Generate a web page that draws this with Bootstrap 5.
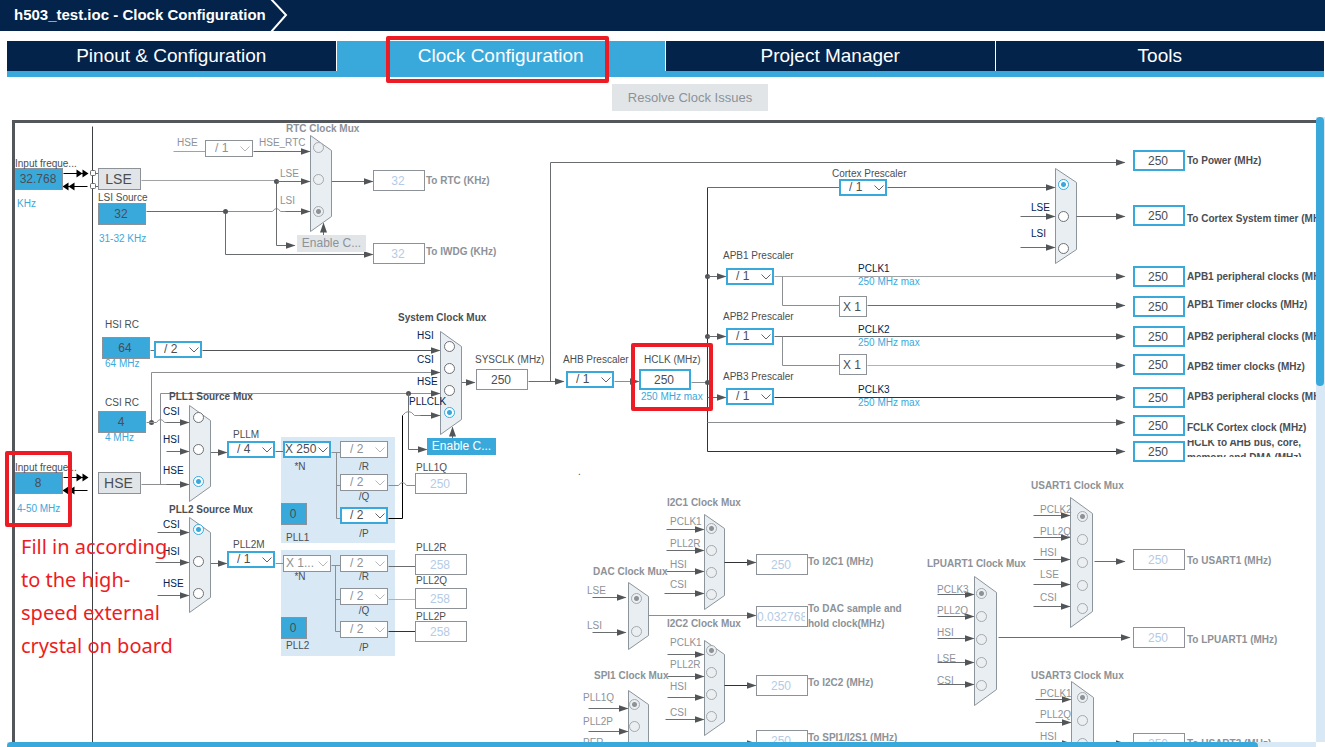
<!DOCTYPE html>
<html lang="en">
<head>
<meta charset="utf-8">
<meta name="viewport" content="width=device-width, initial-scale=1">
<title>h503_test.ioc - Clock Configuration</title>
<link rel="stylesheet" href="https://cdn.jsdelivr.net/npm/bootstrap@5.3.0/dist/css/bootstrap.min.css">
<style>
  :root {
    --navy: #03234b; --sky: #39a9dc; --ink: #4a4e53; --wire: #525558;
    --dim: #8c9298; --pale: #b4cbe6; --grey: #e1e5e8; --ice: #d9e8f5; --alert: #ed1c24;
  }
  body { font-family: "Liberation Sans", Arial, sans-serif; color: var(--ink); background: #fff; }

  .crumb { background: var(--navy); height: 31px; color: #fff; font-size: 15px; padding-left: 14px; }
  .crumb svg { width: 18px; height: 31px; margin-left: 4px; }

  .view-tabs { margin: 10px 1px 0 7px; border-bottom: 6px solid var(--sky); }
  .view-tabs .nav-item { border-right: 1px solid #fff; }
  .view-tabs .nav-item:last-child { border-right: 0; }
  .view-tabs .nav-link { background: var(--navy); color: #fff; font-size: 19px; line-height: 30px; padding: 0; border-radius: 0; }
  .view-tabs .nav-link.active { background: var(--sky); color: #fff; }

  .tool-row { padding: 7px 0 6px 55px; }
  .btn-resolve, .btn-resolve:disabled { background: var(--grey); color: var(--dim); opacity: 1; border: 0; border-radius: 0; font-size: 13px; line-height: 27px; padding: 0 16px; }

  .clock-canvas { width: 1500px; height: 900px; }
  .clock-canvas > * { position: absolute; }
  .wires { left: 0; top: 0; width: 1500px; height: 900px; }
  .pll-panel { background: var(--ice); }

  .tag { font-size: 10px; line-height: 14px; white-space: nowrap; }
  .tag.head { font-weight: 700; }
  .tag.mid { width: 40px; text-align: center; }
  .tag.navy { color: var(--navy); }
  .tag.sky { color: var(--sky); }
  .tag.dim { color: var(--dim); }
  .tag.two { line-height: 15px; white-space: pre; }
  .tag.cut { height: 17px; overflow: hidden; }
  .tag.cut > span { display: block; margin-top: -5px; }

  .val, .pick, .src { font-size: 12px; border-radius: 0; margin: 0; padding: 0; color: var(--ink); background-color: #fff; }
  .val { width: 52px; height: 21px; border: 1px solid var(--dim); text-align: center; padding-right: 2px; }
  .val.hot { border: 2px solid var(--sky); }
  .val:disabled { color: var(--pale); opacity: 1; background: #fff; }
  .val.osc { width: 48px; height: 22px; background: var(--sky); border: 1px solid var(--dim); }
  .val.frac { width: 26px; }
  .val.mul { width: 28px; }
  .pick { width: 48px; height: 17px; border: 2px solid var(--sky); appearance: none; padding-left: 8px; line-height: 13px;
    background: #fff url("data:image/svg+xml,%3Csvg xmlns='http://www.w3.org/2000/svg' width='10' height='6'%3E%3Cpath d='M.5 .5 5 5 9.500 .5' fill='none' stroke='%23606469'/%3E%3C/svg%3E") no-repeat right 1px center; }
  .pick:disabled { border: 1px solid var(--dim); color: var(--dim); opacity: 1; padding-left: 9px;
    background-image: url("data:image/svg+xml,%3Csvg xmlns='http://www.w3.org/2000/svg' width='10' height='6'%3E%3Cpath d='M.5 .5 5 5 9.500 .5' fill='none' stroke='%23b4b8bc'/%3E%3C/svg%3E"); background-position: right 2px center; }
  .pick.wide { padding-left: 0; }
  .pick.wide:disabled { padding-left: 2px; }
  .src { width: 43px; height: 22px; border: 1px solid var(--dim); background: var(--grey); font-size: 14px; line-height: 20px; padding-right: 2px; }
  .css-btn { width: 69px; height: 17px; border: 0; padding: 0; font-size: 12px; line-height: 17px; background: var(--sky); color: #fff; }
  .css-btn:disabled { background: var(--grey); color: var(--dim); }

  .knob { appearance: none; width: 11px; height: 11px; margin: 0; border: 1px solid #6c7176; border-radius: 50%; background: #fff; }
  .knob:checked { border-color: var(--sky); background: radial-gradient(circle, var(--sky) 0 2px, #fff 3px); }
  .knob:disabled { border-color: #a4a9ad; background: #eceff2; }
  .knob:disabled:checked { background: radial-gradient(circle, #8c9298 0 2px, #eceff2 3px); }

  .mark-box { border: 4px solid var(--alert); border-radius: 2px; pointer-events: none; }
  .tab-mark { position: absolute; inset: -5px 17% -12px 15%; z-index: 2; }
  .note { font-family: "Noto Sans", "Open Sans", sans-serif; color: var(--alert); font-size: 20px; line-height: 33px; white-space: pre; }

  .bar-v { width: 9px; background: var(--ice); padding-right: 1px; }
  .bar-v > div { background: var(--sky); height: 43%; border-radius: 4px; }
  .bar-h { height: 5px; margin: 0 9px 0 7px; background: var(--ice); }
  .bar-h > div { background: var(--sky); width: 95.6%; border-radius: 4px 4px 0 0; }
</style>
</head>
<body class="vh-100 d-flex flex-column overflow-hidden">
<header class="crumb d-flex align-items-center fw-bold flex-shrink-0">
  <span>h503_test.ioc - Clock Configuration</span>
  <svg viewBox="0 0 18 31" fill="none" stroke="#fff" stroke-width="2" aria-hidden="true"><path d="M1-1 16 15 1 32"/></svg>
</header>

<ul class="nav nav-justified view-tabs flex-nowrap flex-shrink-0">
  <li class="nav-item"><a class="nav-link" href="#pinout">Pinout &amp; Configuration</a></li>
  <li class="nav-item position-relative"><a class="nav-link active" aria-current="page" href="#clock">Clock Configuration</a><div class="mark-box tab-mark"></div></li>
  <li class="nav-item"><a class="nav-link" href="#project">Project Manager</a></li>
  <li class="nav-item"><a class="nav-link" href="#tools">Tools</a></li>
</ul>

<div class="tool-row d-flex justify-content-center flex-shrink-0">
  <button class="btn btn-resolve" type="button" disabled>Resolve Clock Issues</button>
</div>

<main class="d-flex flex-grow-1 overflow-hidden">
  <div class="flex-grow-1 overflow-hidden position-relative">
    <div class="clock-canvas position-relative" id="canvas">
      <svg class="wires" viewBox="0 117 1500 900" fill="none" stroke="#6a6d70" aria-hidden="true">
        <defs>
          <marker id="tip" markerUnits="userSpaceOnUse" markerWidth="10" markerHeight="8" refX="9" refY="4" orient="auto"><path d="M0 .5 10 4 0 7.500z" fill="#525558" stroke="none"/></marker>
          <marker id="tip2" markerUnits="userSpaceOnUse" markerWidth="14" markerHeight="10" refX="12" refY="5" orient="auto"><path d="M1 1 7 5 1 9zM7 1 13 5 7 9z" fill="#000" stroke="none"/></marker>
        </defs>
        <g id="wires" transform="translate(.5 .5)"></g>
      </svg>
    </div>
  </div>
  <div class="bar-v flex-shrink-0"><div></div></div>
</main>
<div class="bar-h flex-shrink-0"><div class="h-100"></div></div>

<script src="https://cdn.jsdelivr.net/npm/bootstrap@5.3.0/dist/js/bootstrap.bundle.min.js"></script>
<script>
const canvas = document.getElementById('canvas');
const wires = document.getElementById('wires');
const TOP = 117;              // y at which the drawing's coordinates start
let serial = 0;

function put(tag, cls, x, y, props = {}) {
  const el = document.createElement(tag);
  el.className = cls;
  el.style.left = x + 'px';
  el.style.top = (y - TOP) + 'px';
  Object.assign(el, props);
  canvas.append(el);
  return el;
}
function draw(tag, attrs) {
  const el = document.createElementNS('http://www.w3.org/2000/svg', tag);
  for (const k in attrs) el.setAttribute(k, attrs[k]);
  wires.append(el);
}
const wire = (d, tone) => draw('path', { d, stroke: tone || '#6a6d70' });
const arrow = (d, tone) => draw('path', { d, stroke: tone || '#6a6d70', 'marker-end': 'url(#tip)' });
const dot = (cx, cy) => draw('circle', { cx, cy, r: 2.5, fill: '#525558', stroke: 'none' });
// text is placed by its left edge and its vertical centre
const tag = (text, x, cy, cls = '') => put('span', 'tag ' + cls, x, cy - 7, { textContent: text });

function value(text, x, y, cls = '', label = null) {
  const id = 'f' + (++serial);
  put('input', 'val ' + cls.replace('off', ''), x, y, { type: 'text', value: text, id, disabled: /off/.test(cls), ariaLabel: label ? null : 'Frequency' });
  if (label) put('label', 'tag ' + (label[3] || ''), label[1], label[2] - 7, { textContent: label[0], htmlFor: id });
}
function pick(text, x, y, off = false, label = null, cls = '') {
  const id = 'f' + (++serial);
  const el = put('select', 'pick ' + cls, x, y, { id, disabled: off, ariaLabel: label ? null : 'Divider' });
  el.add(new Option(text));
  if (label) put('label', 'tag ' + (label[3] || ''), label[1], label[2] - 7, { textContent: label[0], htmlFor: id });
}

/* mux: outline, title, and rows of [name, label x, label y, knob y, wire start x, wire y, wire end x] */
function mux(m) {
  const [x, y, w, h, cut] = m.box;
  draw('path', { d: `M${x} ${y}l${w} ${cut}v${h - 2 * cut}l${-w} ${cut}z`, fill: '#e9eef2', stroke: '#8c949c' });
  if (m.title[0]) tag(m.title[0], m.title[1], m.title[2], 'head' + (m.off ? ' dim' : ''));
  m.rows.forEach((r, i) => {
    const id = 'f' + (++serial);
    if (r[4]) arrow(`M${r[4]} ${r[5]}H${r[6]}`);
    put('input', 'knob', m.kx - 5, r[3] - 5, { type: 'radio', name: 'mux' + x + '-' + y, id, checked: i === m.on, disabled: !!m.off, ariaLabel: r[0] ? null : 'Cortex prescaler' });
    if (r[0]) put('label', 'tag ' + (m.off ? 'dim' : 'navy'), r[1], r[2] - 7, { textContent: r[0], htmlFor: id });
  });
}

/* frame */
draw('path', { d: 'M1500 121H13V1000', stroke: '#53565a', 'stroke-width': 3 });
wire('M92 126V1000', '#3c3f42');

/* PLL panels */
put('div', 'pll-panel', 281, 437).style.cssText += 'width:114px;height:106px';
put('div', 'pll-panel', 281, 550).style.cssText += 'width:114px;height:106px';
canvas.querySelectorAll('.pll-panel').forEach(p => canvas.prepend(p));

/* low-speed wires */
wire('M173 151H205', '#a0a3a6'); wire('M141 180H276', '#a0a3a6');
wire('M146 211H225'); wire('M225 211H272q4-6 8 0H290', '#8c8f92');
arrow('M276 181V245H294'); arrow('M225 211V254H372'); dot(276, 181); dot(225, 211);
arrow('M331 181H372'); arrow('M323 235V223');
for (const [a, b] of [[173, 186], [477, 490]]) {
  draw('path', { d: `M63 ${a}H87`, stroke: '#000', 'marker-end': 'url(#tip2)' });
  draw('path', { d: `M87 ${b}H63`, stroke: '#000', 'marker-end': 'url(#tip2)' });
}
wire('M92 173H98M92 186H98');
for (const y of [173, 186]) draw('rect', { x: 90, y: y - 3, width: 5, height: 5, rx: 1, fill: '#fff' });

/* high-speed wires */
wire('M150 350H154'); arrow('M202 350H439', '#525558');
arrow('M151 422V372H439', '#8c8f92'); dot(151, 422); wire('M146 422H156q4-6 8 0H170', '#8c8f92');
wire('M141 484H170', '#8c8f92'); arrow('M160 484V393H439', '#8c8f92'); dot(408, 393);
arrow('M408 393V449H426'); wire('M402 415q6-8 12 0H425', '#8c8f92');
wire('M388 518H402V415', '#000'); wire('M388 485H398q4-6 8 0H415', '#8c8f92');
arrow('M461 382H474'); arrow('M452 438V427');
arrow('M210 452H226'); wire('M275 451H283');
wire('M331 452H340M336 452V518H340M336 485H340', '#8c8f92');
arrow('M210 563H226'); wire('M275 563H283', '#8c8f92');
wire('M331 565H340M335 565V631H340M335 599H340', '#8c8f92');
wire('M388 566H415'); wire('M388 599H415', '#b0b3b6'); wire('M388 631H415', '#303336');

/* system clock distribution */
arrow('M528 381H563'); arrow('M550 381V162H1124'); arrow('M614 381H638', '#8c8f92');
wire('M691 382H707', '#8c8f92'); wire('M707 187V451', '#303336');
for (const y of [276, 336, 382]) dot(707, y);
for (const y of [276, 336, 397]) arrow(`M707 ${y}H725`);
wire('M707 187H839');
arrow('M774 276H1124', '#a0a3a6'); arrow('M774 336H1124'); arrow('M774 397H1124', '#303336');
wire('M782 276V305H839', '#8c8f92'); arrow('M867 305H1124');
wire('M782 336V365H839', '#8c8f92'); arrow('M867 365H1124', '#b0b3b6');
arrow('M707 422H1124', '#8c8f92'); arrow('M707 451H1124', '#303336');

/* muxes */
mux({ title: ['RTC Clock Mux', 286, 129], box: [310, 135, 21, 96, 15], kx: 318, on: 2, off: 1, rows: [
  ['HSE_RTC', 259, 143, 147, 253, 151, 309], ['LSE', 280, 174, 179, 276, 181, 309], ['LSI', 280, 201, 211, 285, 211, 309]] });
mux({ title: ['System Clock Mux', 398, 318], box: [440, 331, 21, 103, 15], kx: 449, on: 3, rows: [
  ['HSI', 417, 336, 346], ['CSI', 417, 360, 368], ['HSE', 417, 382, 390], ['PLLCLK', 409, 402, 412, 420, 415, 439]] });
mux({ title: ['PLL1 Source Mux', 169, 397], box: [189, 405, 21, 96, 15], kx: 198, on: 2, rows: [
  ['CSI', 163, 412, 417, 166, 422, 188], ['HSI', 163, 440, 449, 166, 451, 188], ['HSE', 163, 471, 481, 166, 484, 188]] });
mux({ title: ['PLL2 Source Mux', 169, 510], box: [189, 517, 21, 95, 15], kx: 198, on: 0, rows: [
  ['CSI', 163, 525, 529, 157, 532, 188], ['HSI', 163, 552, 561, 155, 562, 188], ['HSE', 163, 584, 593, 157, 595, 188]] });
mux({ title: [''], box: [1055, 168, 21, 95, 14], kx: 1063, on: 0, rows: [
  ['', 1031, 180, 184, 887, 187, 1054], ['LSE', 1031, 208, 216, 1020, 216, 1054], ['LSI', 1031, 234, 248, 1020, 247, 1054]] });
mux({ title: ['I2C1 Clock Mux', 667, 503], box: [704, 514, 20, 95, 14], kx: 711, on: 0, off: 1, rows: [
  ['PCLK1', 670, 522, 528, 666, 529, 703], ['PLL2R', 670, 544, 550, 666, 550, 703], ['HSI', 670, 565, 572, 666, 571, 703], ['CSI', 670, 585, 594, 664, 593, 703]] });
mux({ title: ['DAC Clock Mux', 593, 572], box: [628, 582, 20, 67, 14], kx: 636, on: 0, off: 1, rows: [
  ['LSE', 587, 591, 598, 592, 597, 625], ['LSI', 587, 626, 631, 592, 632, 625]] });
mux({ title: ['I2C2 Clock Mux', 667, 624], box: [704, 640, 20, 95, 14], kx: 711, on: 0, off: 1, rows: [
  ['PCLK1', 670, 643, 650, 667, 654, 703], ['PLL2R', 670, 665, 672, 667, 676, 703], ['HSI', 670, 687, 694, 667, 697, 703], ['CSI', 670, 713, 716, 665, 719, 703]] });
mux({ title: ['SPI1 Clock Mux', 594, 676], box: [628, 690, 20, 117, 14], kx: 634, on: 0, off: 1, rows: [
  ['PLL1Q', 583, 698, 704, 588, 708, 627], ['PLL2P', 583, 722, 726, 588, 731, 627], ['PER', 583, 743, 748, 588, 753, 627]] });
mux({ title: ['USART1 Clock Mux', 1031, 486], box: [1070, 497, 22, 130, 16], kx: 1082, on: 0, off: 1, rows: [
  ['PCLK2', 1040, 510, 516, 1033, 515, 1069], ['PLL2Q', 1040, 532, 539, 1033, 537, 1069], ['HSI', 1040, 553, 562, 1033, 559, 1069],
  ['LSE', 1040, 575, 585, 1033, 584, 1069], ['CSI', 1040, 598, 608, 1033, 606, 1069]] });
mux({ title: ['LPUART1 Clock Mux', 927, 564], box: [974, 576, 22, 129, 16], kx: 981, on: 0, off: 1, rows: [
  ['PCLK3', 937, 590, 593, 937, 594, 973], ['PLL2Q', 937, 611, 616, 937, 616, 973], ['HSI', 937, 633, 639, 937, 638, 973],
  ['LSE', 937, 659, 662, 937, 662, 973], ['CSI', 937, 681, 685, 937, 684, 973]] });
mux({ title: ['USART3 Clock Mux', 1031, 676], box: [1071, 681, 22, 130, 16], kx: 1082, on: 0, off: 1, rows: [
  ['PCLK1', 1040, 694, 697, 1035, 699, 1070], ['PLL2Q', 1040, 715, 720, 1035, 722, 1070], ['HSI', 1040, 737, 743, 1035, 743, 1070]] });
arrow('M1076 216H1124'); arrow('M724 562H755', '#303336'); arrow('M648 615H755', '#8c8f92'); arrow('M724 685H755', '#303336');
arrow('M648 743H755'); arrow('M1094 561H1124'); arrow('M998 637H1129'); arrow('M1094 743H1124');

/* oscillators */
value('32.768', 15, 168, 'osc', ['Input freque...', 15, 164]); tag('KHz', 17, 204, 'sky');
value('32', 98, 203, 'osc', ['LSI Source', 98, 198]); tag('31-32 KHz', 99, 239, 'sky');
value('64', 102, 337, 'osc', ['HSI RC', 105, 325]); tag('64 MHz', 105, 364, 'sky');
value('4', 98, 411, 'osc', ['CSI RC', 105, 403]); tag('4 MHz', 105, 438, 'sky');
value('8', 15, 472, 'osc', ['Input freque...', 15, 468]); tag('4-50 MHz', 17, 509, 'sky');
put('button', 'src', 98, 168, { type: 'button', textContent: 'LSE' });
put('button', 'src', 98, 472, { type: 'button', textContent: 'HSE' });
put('button', 'css-btn', 297, 235, { type: 'button', textContent: 'Enable C...', disabled: true });
put('button', 'css-btn', 427, 438, { type: 'button', textContent: 'Enable C...' });

/* dividers and multipliers */
pick('/ 1', 205, 140, true, ['HSE', 177, 143, 'dim']);
pick('/ 2', 154, 341);
pick('/ 4', 227, 441, false, ['PLLM', 233, 435]);
pick('X 250', 283, 441, false, ['*N', 280, 467, 'mid'], 'wide');
pick('/ 2', 340, 441, true, ['/R', 344, 467, 'mid']);
pick('/ 2', 340, 474, true, ['/Q', 344, 497, 'mid']);
pick('/ 2', 340, 507, false, ['/P', 344, 534, 'mid']);
pick('/ 1', 227, 551, false, ['PLL2M', 233, 545]);
pick('X 1...', 283, 555, true, ['*N', 280, 577, 'mid'], 'wide');
pick('/ 2', 340, 555, true, ['/R', 344, 577, 'mid']);
pick('/ 2', 340, 588, true, ['/Q', 344, 611, 'mid']);
pick('/ 2', 340, 621, true, ['/P', 344, 648, 'mid']);
pick('/ 1', 566, 371, false, ['AHB Prescaler', 563, 360]);
pick('/ 1', 839, 179, false, ['Cortex Prescaler', 832, 174]);
pick('/ 1', 726, 268, false, ['APB1 Prescaler', 723, 256]);
pick('/ 1', 726, 328, false, ['APB2 Prescaler', 723, 317]);
pick('/ 1', 726, 388, false, ['APB3 Prescaler', 723, 377]);
value('0', 281, 503, 'osc frac', ['PLL1', 286, 538]);
value('0', 281, 617, 'osc frac', ['PLL2', 286, 646]);
value('X 1', 839, 296, 'mul'); value('X 1', 839, 354, 'mul');
[269, 330, 390].forEach((y, i) => { tag('PCLK' + (i + 1), 858, y, 'navy'); tag('250 MHz max', 858, y + 13, 'sky'); });

/* frequencies */
value('32', 373, 170, 'off', ['To RTC (KHz)', 426, 181, 'head dim']);
value('32', 373, 243, 'off', ['To IWDG (KHz)', 426, 252, 'head dim']);
value('250', 476, 369, '', ['SYSCLK (MHz)', 475, 360]);
value('250', 639, 369, 'hot', ['HCLK (MHz)', 644, 360]); tag('250 MHz max', 641, 397, 'sky');
value('250', 415, 473, 'off', ['PLL1Q', 416, 468]);
value('258', 415, 554, 'off', ['PLL2R', 416, 548]);
value('258', 415, 588, 'off', ['PLL2Q', 416, 581]);
value('258', 415, 621, 'off', ['PLL2P', 416, 617]);
[['To Power (MHz)', 150, 161], ['To Cortex System timer (MHz)', 205, 219], ['APB1 peripheral clocks (MHz)', 266, 277],
 ['APB1 Timer clocks (MHz)', 296, 305], ['APB2 peripheral clocks (MHz)', 326, 337], ['APB2 timer clocks (MHz)', 354, 367],
 ['APB3 peripheral clocks (MHz)', 387, 397], ['FCLK Cortex clock (MHz)', 415, 428]]
  .forEach(([t, y, cy]) => value('250', 1133, y, 'hot', [t, 1187, cy, 'head']));
value('250', 1133, 441, 'hot');
put('span', 'tag head two cut', 1187, 440).innerHTML = '<span>HCLK to AHB bus, core,\nmemory and DMA (MHz)</span>';
value('250', 756, 554, 'off', ['To I2C1 (MHz)', 808, 562, 'head dim']);
value('0.032768', 756, 606, 'off', ['To DAC sample and\nhold clock(MHz)', 808, 608, 'head dim two']);
value('250', 756, 675, 'off', ['To I2C2 (MHz)', 808, 683, 'head dim']);
value('250', 756, 730, 'off', ['To SPI1/I2S1 (MHz)', 808, 738, 'head dim']);
value('250', 1133, 549, 'off', ['To USART1 (MHz)', 1187, 561, 'head dim']);
value('250', 1133, 627, 'off', ['To LPUART1 (MHz)', 1187, 640, 'head dim']);
value('250', 1133, 733, 'off', ['To USART3 (MHz)', 1187, 744, 'head dim']);
tag('.', 578, 472);

/* annotations */
put('div', 'mark-box', 5, 451).style.cssText += 'width:67px;height:76px';
put('div', 'mark-box', 631, 343).style.cssText += 'width:82px;height:68px';
put('div', 'note', 21, 530, { textContent: 'Fill in according\nto the high-\nspeed external\ncrystal on board' });
</script>
</body>
</html>
